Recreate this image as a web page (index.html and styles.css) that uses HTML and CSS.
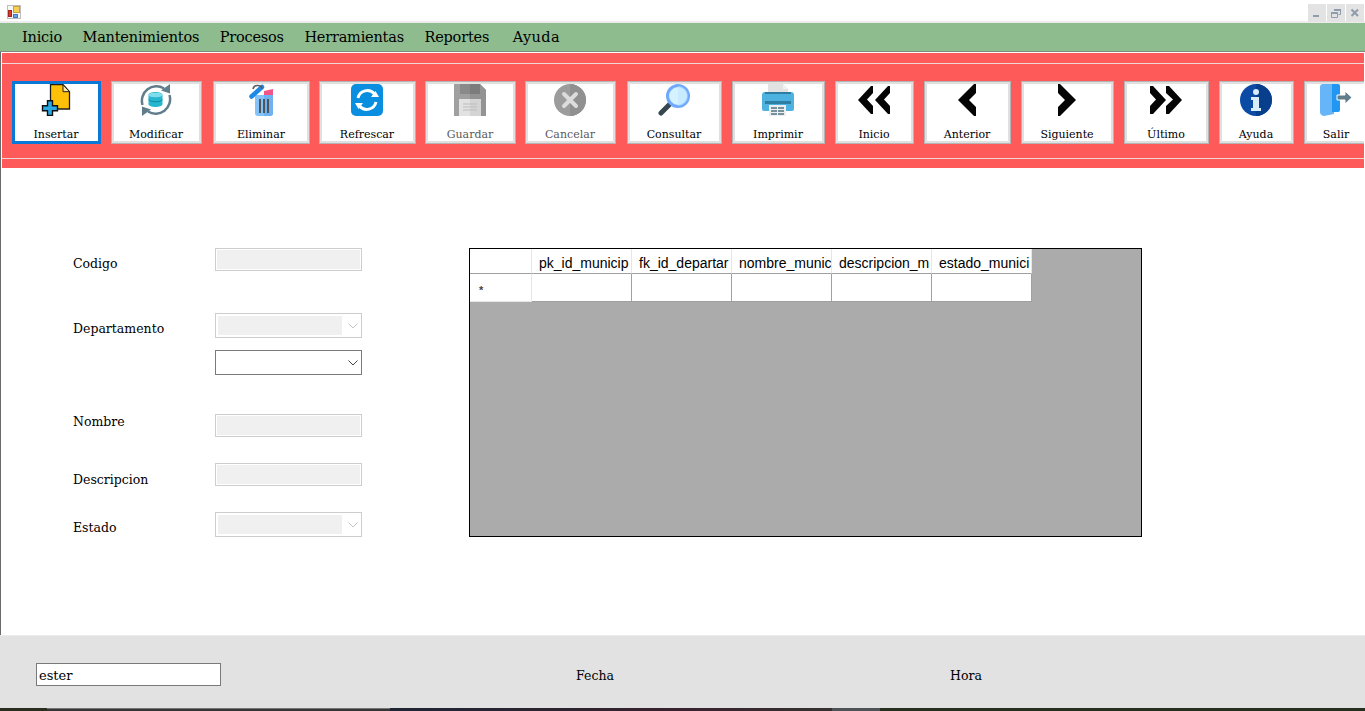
FILE: index.html
```html
<!DOCTYPE html>
<html lang="es">
<head>
<meta charset="utf-8">
<title>Municipios</title>
<link rel="stylesheet" href="styles.css">
</head>
<body>
<div class="window">
  <header class="titlebar">
    <svg class="app-icon" width="14" height="14" viewBox="0 0 14 14">
      <rect x="0.5" y="0.5" width="13" height="13" fill="#f6f6f6" stroke="#bdbdbd"/>
      <rect x="6.500" y="1.500" width="6" height="6" fill="#f7cf55" stroke="#c9a233"/>
      <rect x="1.500" y="5.500" width="3" height="6" fill="#d8392c" stroke="#a5261c"/>
      <rect x="6.500" y="9.500" width="4" height="3" fill="#6aa3ea" stroke="#3f78c6"/>
    </svg>
    <div class="win-controls">
      <div class="win-btn"><svg width="18" height="18" viewBox="0 0 18 18"><rect x="5" y="11" width="6" height="2" fill="#8e9cab"/></svg></div>
      <div class="win-btn"><svg width="18" height="18" viewBox="0 0 18 18"><path d="M7.500 5.500h6v5h-2M4.500 8.500h6v5h-6z" fill="none" stroke="#8e9cab"/><path d="M7 5h7v2H7zM4 8h7v2H4z" fill="#8e9cab"/></svg></div>
      <div class="win-btn"><svg width="18" height="18" viewBox="0 0 18 18"><path d="M5.500 5.500l6.500 6.500M12 5.500L5.500 12" fill="none" stroke="#8e9cab" stroke-width="2"/></svg></div>
    </div>
  </header>

  <nav class="menubar">
    <span class="menu-item">Inicio</span>
    <span class="menu-item">Mantenimientos</span>
    <span class="menu-item">Procesos</span>
    <span class="menu-item">Herramientas</span>
    <span class="menu-item">Reportes</span>
    <span class="menu-item">Ayuda</span>
  </nav>

  <main class="content">
    <section class="toolbar-panel">
      <div class="toolbar">
        <div class="tool tool-insertar is-focused">
          <svg class="tool-icon" viewBox="0 0 32 32">
            <path d="M10.500.7h12.500l6.500 7V25H10.500z" fill="#ffc107" stroke="#1c1c1c" stroke-width="1.300"/>
            <path d="M23 .7v7h6.500z" fill="#ffe9a8" stroke="#1c1c1c" stroke-width="1"/>
            <path d="M7.500 16.700h5v5h5v5h-5v4.700h-5v-4.700h-5v-5h5z" fill="#29a9e6" stroke="#111" stroke-width="1.400"/>
          </svg>
          <span class="tool-label">Insertar</span>
        </div>
        <div class="tool tool-modificar">
          <svg class="tool-icon" viewBox="0 0 32 32">
            <path d="M2.500 21A14.500 14.500 0 0 1 24 4.500" fill="none" stroke="#607d8b" stroke-width="2.500"/>
            <path d="M29.500 11A14.500 14.500 0 0 1 8 27.500" fill="none" stroke="#607d8b" stroke-width="2.500"/>
            <path d="M21 6.500l9-6.500v9.500zM11 25.500L2 32v-9.500z" fill="#607d8b"/>
            <path d="M8.500 11c0-4 14-4 14 0v9c0 4-14 4-14 0z" fill="#26b6cf"/>
            <path d="M8.500 11c0-3 14-3 14 0s-14 3-14 0z" fill="#7fdcec"/>
            <path d="M8.500 15.500c2 3 12 3 14 0" fill="none" stroke="#0b8ba3"/>
          </svg>
          <span class="tool-label">Modificar</span>
        </div>
        <div class="tool tool-eliminar">
          <svg class="tool-icon" viewBox="0 0 32 32">
            <path d="M10 11h18v18q0 3-3 3H13q-3 0-3-3z" fill="#84c2fa"/>
            <path d="M19 11h9v18q0 3-3 3h-6z" fill="#6fb2f2"/>
            <path d="M19 7l9-2v6h-9z" fill="#f2558a"/>
            <path d="M15 15v14M19 15v14M23 15v14" stroke="#4a4a4a" stroke-width="1.800"/>
            <path d="M6.500 12.500L17 3" stroke="#1e88e5" stroke-width="4.500" stroke-linecap="round"/>
            <path d="M8 5Q9 1 13 1.500T17 5" fill="none" stroke="#5c5c5c" stroke-width="1.600"/>
          </svg>
          <span class="tool-label">Eliminar</span>
        </div>
        <div class="tool tool-refrescar">
          <svg class="tool-icon" viewBox="0 0 32 32">
            <rect width="32" height="32" rx="5" fill="#0a8fe0"/>
            <path d="M7 14A9.500 9.500 0 0 1 23.500 10" fill="none" stroke="#fff" stroke-width="3"/>
            <path d="M25 18A9.500 9.500 0 0 1 8.500 22" fill="none" stroke="#fff" stroke-width="3"/>
            <path d="M20 13h8l-3.500-6zM12 19H4l3.500 6z" fill="#fff"/>
          </svg>
          <span class="tool-label">Refrescar</span>
        </div>
        <div class="tool tool-guardar is-disabled">
          <svg class="tool-icon" viewBox="0 0 32 32">
            <path d="M0 0h26l6 6v26H0z" fill="#a0a0a0"/>
            <path d="M16 0h10l6 6v26H16z" fill="#939393"/>
            <rect x="6" y="0" width="20" height="10" fill="#8a8a8a"/>
            <rect x="16" y="0" width="10" height="10" fill="#7c7c7c"/>
            <rect x="5" y="15" width="22" height="17" fill="#e2e2e2"/>
            <rect x="16" y="15" width="11" height="17" fill="#d4d4d4"/>
            <path d="M9 20h14M9 23h14M9 26h14" stroke="#bdbdbd"/>
          </svg>
          <span class="tool-label">Guardar</span>
        </div>
        <div class="tool tool-cancelar is-disabled">
          <svg class="tool-icon" viewBox="0 0 32 32">
            <circle cx="16" cy="16" r="16" fill="#9c9c9c"/>
            <path d="M16 0a16 16 0 0 1 0 32z" fill="#909090"/>
            <path d="M10 10l12 12M22 10L10 22" stroke="#dcdcdc" stroke-width="4" stroke-linecap="round"/>
          </svg>
          <span class="tool-label">Cancelar</span>
        </div>
        <div class="tool tool-consultar">
          <svg class="tool-icon" viewBox="0 0 32 32">
            <path d="M3 29L13 19" stroke="#37474f" stroke-width="5" stroke-linecap="round"/>
            <circle cx="20" cy="12" r="10.500" fill="#d4f2ff" stroke="#6ea8ff" stroke-width="3"/>
            <path d="M20 2a10 10 0 0 1 0 20z" fill="#bfe6ff" opacity=".6"/>
          </svg>
          <span class="tool-label">Consultar</span>
        </div>
        <div class="tool tool-imprimir">
          <svg class="tool-icon" viewBox="0 0 32 32">
            <path d="M6 0h15l5 5v5H6z" fill="#e2e2e2"/>
            <path d="M21 0l5 5h-5z" fill="#f2f2f2"/>
            <path d="M0 11q0-3 3-3h26q3 0 3 3v14q0 2-2 2H2q-2 0-2-2z" fill="#4db2e0"/>
            <rect x="3" y="8" width="26" height="2" fill="#2e7ea3"/>
            <rect x="3" y="17" width="26" height="3" fill="#2e7ea3"/>
            <rect x="7" y="21" width="17" height="11" fill="#eceff1"/>
            <path d="M9 24h13M9 27h13M9 30h13" stroke="#78909c" stroke-width="2"/>
            <path d="M15.500 22v9" stroke="#eceff1"/>
          </svg>
          <span class="tool-label">Imprimir</span>
        </div>
        <div class="tool tool-inicio">
          <svg class="tool-icon" viewBox="0 0 32 32">
            <path d="M15 2v7L9 15.500l6 6.500v8h-2L0 16 13 2zM32 2v7l-6 6.500 6 6.500v8h-2L17 16 30 2z" fill="#050505"/>
          </svg>
          <span class="tool-label">Inicio</span>
        </div>
        <div class="tool tool-anterior">
          <svg class="tool-icon" viewBox="0 0 32 32">
            <path d="M23 0h2v9l-7 7 7 7v9h-2L7 16z" fill="#050505"/>
          </svg>
          <span class="tool-label">Anterior</span>
        </div>
        <div class="tool tool-siguiente">
          <svg class="tool-icon" viewBox="0 0 32 32">
            <path d="M9 0H7v9l7 7-7 7v9h2l16-16z" fill="#050505"/>
          </svg>
          <span class="tool-label">Siguiente</span>
        </div>
        <div class="tool tool-ultimo">
          <svg class="tool-icon" viewBox="0 0 32 32">
            <path d="M0 2h3l13 14L3 30H0v-8l6-6.500L0 9zM16 2h3l13 14-13 14h-3v-8l7-6.500L16 9z" fill="#050505"/>
          </svg>
          <span class="tool-label">Último</span>
        </div>
        <div class="tool tool-ayuda">
          <svg class="tool-icon" viewBox="0 0 32 32">
            <circle cx="16" cy="16" r="16" fill="#0b4ba6"/>
            <path d="M16 0a16 16 0 0 1 0 32z" fill="#083f8d"/>
            <circle cx="16" cy="8" r="3" fill="#d8ecfb"/>
            <path d="M11 13h8v11h2v3H11v-3h2v-8h-2z" fill="#d8ecfb"/>
          </svg>
          <span class="tool-label">Ayuda</span>
        </div>
        <div class="tool tool-salir">
          <svg class="tool-icon" viewBox="0 0 32 32">
            <path d="M3 0h11v30l-10 2q-4-1-4-4V3q0-3 3-3z" fill="#66b5f8"/>
            <path d="M12 0h6q2 0 2 2v24q0 2-2 2h-6z" fill="#2196f3"/>
            <path d="M17 11h8V7l7 6.500-7 6.500v-4h-8z" fill="#607d8b" stroke="#fff" stroke-width="1"/>
          </svg>
          <span class="tool-label">Salir</span>
        </div>
      </div>
    </section>

    <section class="workspace">
      <div class="form">
        <div class="form-row row-codigo">
          <label class="form-label">Codigo</label>
          <div class="field is-off"></div>
        </div>
        <div class="form-row row-depto">
          <label class="form-label">Departamento</label>
          <div class="combo is-off"><span class="combo-fill"></span><svg class="chev" width="10" height="6" viewBox="0 0 10 6"><path d="M.5.500L5 5 9.500.500" fill="none" stroke="#c4c4c4"/></svg></div>
        </div>
        <div class="form-row row-depto2">
          <span class="form-label"></span>
          <div class="combo"><svg class="chev" width="10" height="6" viewBox="0 0 10 6"><path d="M.5.500L5 5 9.500.500" fill="none" stroke="#444"/></svg></div>
        </div>
        <div class="form-row row-nombre">
          <label class="form-label">Nombre</label>
          <div class="field is-off"></div>
        </div>
        <div class="form-row row-desc">
          <label class="form-label">Descripcion</label>
          <div class="field is-off"></div>
        </div>
        <div class="form-row row-estado">
          <label class="form-label">Estado</label>
          <div class="combo is-off"><span class="combo-fill"></span><svg class="chev" width="10" height="6" viewBox="0 0 10 6"><path d="M.5.500L5 5 9.500.500" fill="none" stroke="#c4c4c4"/></svg></div>
        </div>
      </div>

      <div class="grid-box">
        <div class="grid-head">
          <div class="corner"></div>
          <div class="col-head">pk_id_municip</div>
          <div class="col-head">fk_id_departar</div>
          <div class="col-head">nombre_munic</div>
          <div class="col-head">descripcion_m</div>
          <div class="col-head">estado_munici</div>
        </div>
        <div class="grid-row">
          <div class="row-head"><span class="star">*</span></div>
          <div class="cell"></div>
          <div class="cell"></div>
          <div class="cell"></div>
          <div class="cell"></div>
          <div class="cell"></div>
        </div>
      </div>
    </section>
  </main>

  <footer class="statusbar">
    <div class="user-box">ester</div>
    <span class="status-fecha">Fecha</span>
    <span class="status-hora">Hora</span>
  </footer>
  <div class="desktop-strip">
    <span class="strip strip-a"></span>
    <span class="strip strip-b"></span>
    <span class="strip strip-c"></span>
    <span class="strip strip-d"></span>
    <span class="strip strip-e"></span>
  </div>
</div>
</body>
</html>
```

FILE: styles.css
```css
* { box-sizing: border-box; }

html, body {
  margin: 0;
  height: 100%;
  overflow: hidden;
  background: #fff;
}

.window {
  width: 1365px;
  height: 711px;
  display: flex;
  flex-direction: column;
  font-family: "DejaVu Serif", "Liberation Serif", serif;
  color: #000;
}

/* title bar */
.titlebar {
  height: 23px;
  flex: none;
  display: flex;
  align-items: flex-start;
  justify-content: space-between;
  background: linear-gradient(#fff 21px, #ececec 21px);
  padding: 4px 1px 0 7px;
}
.app-icon { margin-top: 1px; }
.win-controls { display: flex; gap: 1px; }
.win-btn { width: 18px; height: 18px; background: #e3e3e3; display: flex; }

/* menu */
.menubar {
  height: 29px;
  flex: none;
  display: flex;
  gap: 20.5px;
  align-items: center;
  padding: 0 0 1px 22px;
  background: #8fbc8f;
  border-bottom: 1px solid #7d8a7d;
}
.menu-item { font-size: 14.500px; letter-spacing: -0.2px; }
.menu-item:last-child { margin-left: 3px; letter-spacing: 0.4px; }

/* main */
.content {
  flex: 1;
  min-height: 0;
  display: flex;
  flex-direction: column;
  border-left: 1px solid #6a6a6a;
  padding: 1px 0 0 1px;
}

.toolbar-panel {
  height: 115px;
  flex: none;
  background: #ff5a5a;
  margin-right: 1px;
  padding-top: 10px;
}
.toolbar {
  height: 96px;
  border-top: 1px solid #f1d6d6;
  border-bottom: 1px solid #f1d6d6;
  padding: 17px 0 0 10px;
  display: flex;
  overflow: hidden;
}

.tool {
  flex: none;
  height: 63px;
  margin-right: 10px;
  background: #fff;
  border: 1px solid #b4b4b4;
  box-shadow: inset 0 0 0 2px #e0e0e0;
  display: flex;
  flex-direction: column;
  align-items: center;
  padding: 2px 1px 0 0;
}
.tool.is-focused { border: 3px solid #0a78d7; box-shadow: none; padding-top: 0; }
.tool-icon { width: 32px; height: 32px; display: block; flex: none; }
.tool-label {
  margin-top: 12px;
  font-size: 11px;
  line-height: 14px;
  white-space: nowrap;
}
.is-disabled .tool-label { color: #5a5a5a; }

.tool-insertar { width: 89px; }
.tool-modificar { width: 91px; margin-right: 11px; }
.tool-eliminar { width: 97px; margin-right: 9px; }
.tool-refrescar { width: 97px; margin-right: 9px; }
.tool-guardar { width: 91px; margin-right: 9px; }
.tool-cancelar { width: 91px; margin-right: 11px; }
.tool-consultar { width: 95px; }
.tool-imprimir { width: 93px; }
.tool-inicio { width: 79px; }
.tool-anterior { width: 87px; }
.tool-siguiente { width: 93px; }
.tool-ultimo { width: 85px; }
.tool-ayuda { width: 75px; }
.tool-salir { width: 65px; margin-right: 0; }

/* workspace */
.workspace {
  flex: 1;
  display: flex;
  align-items: flex-start;
  padding: 80px 0 0 71px;
  background: #fff;
}

.form { width: 396px; flex: none; }
.form-row { display: flex; align-items: flex-start; }
.form-label {
  width: 142px;
  flex: none;
  font-size: 12.500px;
  line-height: 16px;
}
.row-codigo { height: 65px; }
.row-codigo .form-label { margin-top: 8px; }
.row-depto { height: 37px; }
.row-depto .form-label { margin-top: 8px; }
.row-depto2 { height: 64px; }
.row-nombre { height: 49px; }
.row-nombre .form-label { margin-top: 0; }
.row-desc { height: 49px; }
.row-desc .form-label { margin-top: 9px; }
.row-estado { height: 25px; }
.row-estado .form-label { margin-top: 8px; }

.field {
  width: 147px;
  height: 23px;
  border: 1px solid #7a7a7a;
}
.field.is-off {
  border-color: #cdcdcd;
  background: #f0f0f0;
  box-shadow: inset 0 0 0 1px #fff;
}
.combo {
  width: 147px;
  height: 25px;
  border: 1px solid #7a7a7a;
  background: #fff;
  position: relative;
  padding: 2px;
}
.combo.is-off { border-color: #cdcdcd; }
.combo-fill { display: block; width: 124px; height: 19px; background: #f0f0f0; }
.chev { position: absolute; right: 3px; top: 9px; }

/* data grid */
.grid-box {
  width: 673px;
  height: 289px;
  flex: none;
  background: #ababab;
  border: 1px solid #000;
}
.grid-head, .grid-row { display: flex; }
.grid-head { height: 25px; }
.grid-row { height: 28px; }
.corner {
  width: 62px;
  flex: none;
  background: #fff;
  border-right: 1px solid #e6e6e6;
  border-bottom: 1px solid #a0a0a0;
}
.col-head {
  width: 100px;
  flex: none;
  background: #fff;
  border-right: 1px solid #e6e6e6;
  border-bottom: 1px solid #a0a0a0;
  padding: 5px 0 0 7px;
  font: 14px/18px "Liberation Sans", Arial, sans-serif;
  white-space: nowrap;
  overflow: hidden;
}
.row-head {
  width: 62px;
  flex: none;
  background: #fff;
  border-right: 1px solid #e6e6e6;
  border-bottom: 1px solid #e6e6e6;
  padding: 9px 0 0 9px;
  font: bold 11px/14px "Liberation Sans", Arial, sans-serif;
  color: #444;
}
.cell {
  width: 100px;
  flex: none;
  background: #fff;
  border-right: 1px solid #a0a0a0;
  border-bottom: 1px solid #a0a0a0;
}

/* status bar */
.statusbar {
  height: 73px;
  flex: none;
  display: flex;
  align-items: center;
  background: #e2e2e2;
  border-top: 1px solid #ececec;
  padding: 4px 0 0 36px;
  font-size: 12.500px;
}
.user-box {
  width: 185px;
  height: 23px;
  flex: none;
  background: #fff;
  border: 1px solid #7a7a7a;
  padding: 1px 0 0 2px;
  font-size: 13px;
  line-height: 21px;
}
.status-fecha { margin: 3px 0 0 355px; width: 374px; flex: none; }
.status-hora { margin-top: 3px; flex: none; }

.desktop-strip { height: 3px; flex: none; display: flex; }
.strip { display: block; height: 3px; }
.strip-a { width: 47px; background: #2a2e20; }
.strip-b { width: 343px; background: #363636; border-top: 1px solid #777; }
.strip-c { width: 442px; background: linear-gradient(90deg, #1e2633, #38222f 65%, #35322f); }
.strip-d { width: 48px; background: #4c5256; }
.strip-e { flex: 1; background: #253020; }
```
